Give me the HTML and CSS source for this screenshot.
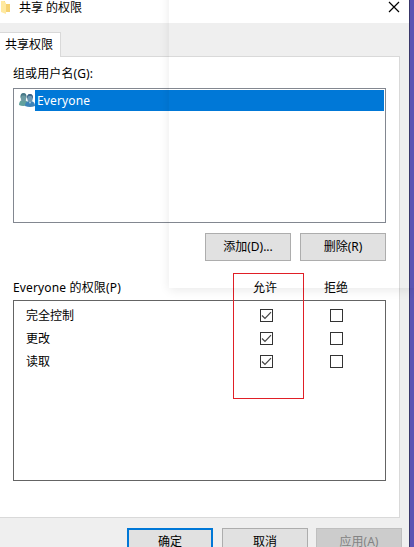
FILE: index.html
```
<!DOCTYPE html>
<html lang="zh-CN">
<head>
<meta charset="utf-8">
<title>共享 的权限</title>
<link rel="stylesheet" href="styles.css">
</head>
<body>
<main class="window">
  <header class="titlebar">
    <svg class="folder" width="10" height="14" viewBox="0 0 10 14"><path d="M1 1h4v3h5v8H1z" fill="#f5d273"/><path d="M1 1h3l2 2v11l-5-2z" fill="#ffe9a0"/></svg>
    <h1 class="title">共享 的权限</h1>
    <svg class="close" width="12" height="12" viewBox="0 0 12 12"><path d="M1 1l10 10M11 1L1 11" stroke="#000" stroke-width="1.2"/></svg>
  </header>
  <div class="tab">共享权限</div>
  <section class="panel">
    <div class="label">组或用户名(G):</div>
    <div class="users">
      <div class="user">
        <svg class="people" width="16" height="15" viewBox="0 0 16 15"><path d="M0 12q0-4 3-5h3q3 1 3 5-5 2-9 0z" fill="#62a19d"/><ellipse cx="4.500" cy="4.500" rx="2.800" ry="4" fill="#6d9ba3"/><path d="M1.500 5q-.5-5 3-5t3 5L6 2.500H3z" fill="#487887"/><path d="M6 13q0-4 3.500-5h3q3.500 1 3.500 5-5 2-10 0z" fill="#3d83b8"/><path d="M9.500 8l1.500 3 1.500-3z" fill="#b5d3e0"/><ellipse cx="11" cy="5" rx="2.800" ry="4" fill="#6c98b4"/><path d="M8 6q-.5-5 3-5t3 5l-1.500-3h-3z" fill="#3d658a"/></svg>
        <span class="selected">Everyone</span>
      </div>
    </div>
    <div class="actions">
      <button class="btn">添加(D)...</button>
      <button class="btn">删除(R)</button>
    </div>
    <div class="heads">
      <span class="caption">Everyone 的权限(P)</span><span class="head">允许</span><span class="head">拒绝</span>
    </div>
    <div class="perms">
      <div class="perm"><span>完全控制</span><i class="box"><svg width="11" height="11" viewBox="0 0 11 11"><path class="tick" d="M1 5.500l3 3L10 2.200"/></svg></i><i class="box"></i></div>
      <div class="perm"><span>更改</span><i class="box"><svg width="11" height="11" viewBox="0 0 11 11"><path class="tick" d="M1 5.500l3 3L10 2.200"/></svg></i><i class="box"></i></div>
      <div class="perm"><span>读取</span><i class="box"><svg width="11" height="11" viewBox="0 0 11 11"><path class="tick" d="M1 5.500l3 3L10 2.200"/></svg></i><i class="box"></i></div>
    </div>
  </section>
  <footer class="footer">
    <button class="btn primary">确定</button>
    <button class="btn">取消</button>
    <button class="btn disabled" disabled>应用(A)</button>
  </footer>
</main>
<div class="highlight"></div>
<div class="ghost"></div>
</body>
</html>
```
FILE: styles.css
```
* { box-sizing: border-box; }
body {
  margin: 0;
  height: 547px;
  position: relative;
  overflow: hidden;
  background: #5b55b3;
  color: #000;
  font: 12px/16px "Noto Sans", "Noto Sans CJK SC", sans-serif;
}
.window {
  width: 410px;
  height: 547px;
  overflow: hidden;
  background: #efefef;
  border-right: 1px solid #38366a;
}
.titlebar {
  display: flex;
  height: 23px;
  background: #fff;
}
.title {
  margin: 0 auto 0 9px;
  font: inherit;
}
.close { margin: 1px 9px 0 0; }
.tab {
  position: relative;
  width: 61px;
  height: 25px;
  margin-top: 9px;
  padding: 4px 0 0 5px;
  background: #fff;
  border: solid #d9d9d9;
  border-width: 1px 1px 0 0;
}
.panel {
  width: 400px;
  height: 462px;
  margin-top: -1px;
  padding: 9px 13px 0;
  background: #fff;
  border: solid #d9d9d9;
  border-width: 1px 1px 1px 0;
}
.label { height: 22px; letter-spacing: .1px; }
.users {
  width: 373px;
  height: 135px;
  padding: 1px;
  border: 1px solid #828790;
}
.user { display: flex; height: 21px; padding-left: 4px; }
.people { margin: 3px 0 0; flex: none; }
.selected {
  flex: 1;
  padding: 3px 2px 0;
  color: #fff;
  background: #0078d7;
  letter-spacing: .15px;
}
.actions {
  display: flex;
  width: 373px;
  justify-content: flex-end;
  gap: 9px;
  margin-top: 10px;
}
.btn {
  width: 86px;
  height: 28px;
  padding: 0;
  font: inherit;
  color: #000;
  background: #e1e1e1;
  border: 1px solid #adadad;
}
.heads {
  display: grid;
  grid-template-columns: 217px 70px 72px;
  height: 39px;
  padding-top: 19px;
}
.caption { letter-spacing: .15px; }
.head { text-align: center; }
.perms {
  width: 373px;
  height: 181px;
  padding: 3px 12px;
  border: 1px solid #646464;
}
.perm {
  display: grid;
  grid-template-columns: 234px 70px 13px;
  height: 23px;
  align-items: center;
}
.box {
  width: 13px;
  height: 13px;
  border: 1px solid #333;
}
.box svg { display: block; }
.tick { fill: none; stroke: #444; stroke-width: 1.2; }
.footer {
  display: flex;
  padding: 10px 0 0 127px;
}
.footer .btn { flex: none; margin-right: 9px; }
.footer .primary { border: 2px solid #0078d7; }
.footer .disabled { margin-left: -1px; color: #838383; background: #ccc; border-color: #bfbfbf; }
.highlight {
  position: absolute;
  left: 233px;
  top: 273px;
  width: 71px;
  height: 126px;
  border: 1px solid #e01f26;
}
.ghost {
  position: absolute;
  left: 169px;
  top: -20px;
  width: 245px;
  height: 308px;
  box-shadow: 0 2px 10px rgba(0, 0, 0, .09);
}
```
